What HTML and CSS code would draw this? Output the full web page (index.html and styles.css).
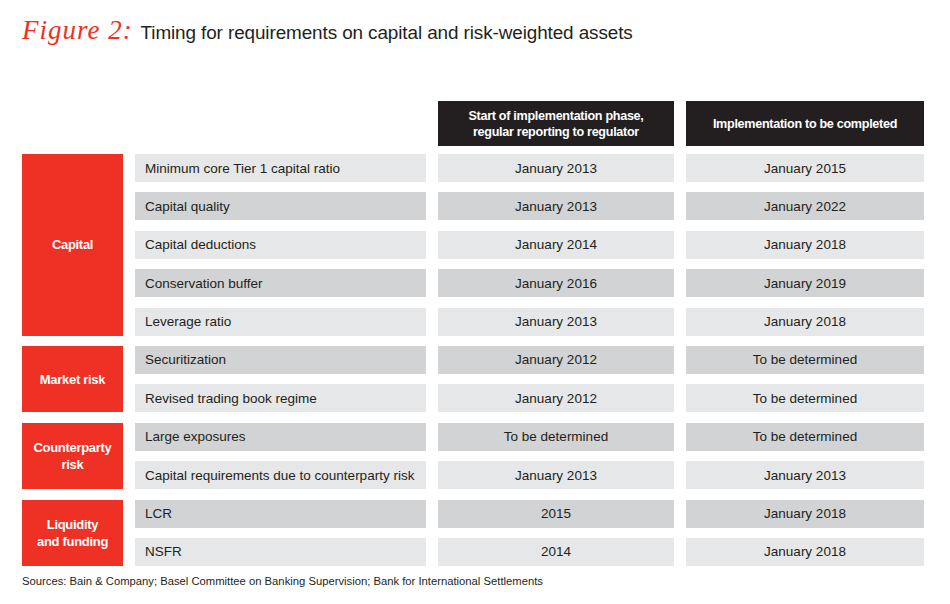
FILE: index.html
```html
<!DOCTYPE html>
<html>
<head>
<meta charset="utf-8">
<link rel="stylesheet" href="styles.css">
</head>
<body>
<div class="page">
  <h1 class="title"><span class="fig">Figure 2:</span> Timing for requirements on capital and risk-weighted assets</h1>
  <div class="grid head">
    <div class="blank"></div>
    <div class="blank"></div>
    <div class="hcell">Start of implementation phase,<br>regular reporting to regulator</div>
    <div class="hcell">Implementation to be completed</div>
  </div>
  <div class="grid body">
    <div class="cat" style="grid-row: 1 / span 5">Capital</div>
    <div class="cell label light">Minimum core Tier 1 capital ratio</div>
    <div class="cell light">January 2013</div>
    <div class="cell light">January 2015</div>
    <div class="cell label dark">Capital quality</div>
    <div class="cell dark">January 2013</div>
    <div class="cell dark">January 2022</div>
    <div class="cell label light">Capital deductions</div>
    <div class="cell light">January 2014</div>
    <div class="cell light">January 2018</div>
    <div class="cell label dark">Conservation buffer</div>
    <div class="cell dark">January 2016</div>
    <div class="cell dark">January 2019</div>
    <div class="cell label light">Leverage ratio</div>
    <div class="cell light">January 2013</div>
    <div class="cell light">January 2018</div>

    <div class="cat" style="grid-row: 6 / span 2">Market risk</div>
    <div class="cell label dark">Securitization</div>
    <div class="cell dark">January 2012</div>
    <div class="cell dark">To be determined</div>
    <div class="cell label light">Revised trading book regime</div>
    <div class="cell light">January 2012</div>
    <div class="cell light">To be determined</div>

    <div class="cat" style="grid-row: 8 / span 2">Counterparty<br>risk</div>
    <div class="cell label dark">Large exposures</div>
    <div class="cell dark">To be determined</div>
    <div class="cell dark">To be determined</div>
    <div class="cell label light">Capital requirements due to counterparty risk</div>
    <div class="cell light">January 2013</div>
    <div class="cell light">January 2013</div>

    <div class="cat" style="grid-row: 10 / span 2">Liquidity<br>and funding</div>
    <div class="cell label dark">LCR</div>
    <div class="cell dark">2015</div>
    <div class="cell dark">January 2018</div>
    <div class="cell label light">NSFR</div>
    <div class="cell light">2014</div>
    <div class="cell light">January 2018</div>
  </div>
  <p class="source">Sources: Bain &amp; Company; Basel Committee on Banking Supervision; Bank for International Settlements</p>
</div>
</body>
</html>
```
FILE: styles.css
```css
html, body {
  margin: 0;
  padding: 0;
  background: #ffffff;
}
body {
  font-family: "Liberation Sans", Arial, sans-serif;
  color: #231f20;
}
.page {
  width: 950px;
  height: 604px;
  padding: 16px 0 0 22px;
  box-sizing: border-box;
}
.title {
  margin: 0;
  font-size: 18.9px;
  font-weight: normal;
  line-height: 28px;
  height: 28px;
  color: #231f20;
  letter-spacing: -0.1px;
  white-space: nowrap;
}
.fig {
  font-family: "Liberation Serif", serif;
  font-style: italic;
  color: #ee3124;
  font-size: 27px;
  letter-spacing: 1px;
  margin-right: 3px;
}
.grid {
  display: grid;
  grid-template-columns: 101px 291px 236px 238px;
  column-gap: 12px;
}
.head {
  margin-top: 57px;
  margin-bottom: 8px;
}
.hcell {
  height: 45px;
  background: #231f20;
  color: #ffffff;
  font-weight: bold;
  font-size: 12.6px;
  letter-spacing: -0.3px;
  line-height: 16px;
  display: flex;
  align-items: center;
  justify-content: center;
  text-align: center;
}
.body {
  grid-auto-rows: 28px;
  row-gap: 10.4px;
}
.cat {
  grid-column: 1;
  background: #ee3124;
  color: #ffffff;
  font-weight: bold;
  font-size: 13px;
  letter-spacing: -0.3px;
  line-height: 17px;
  display: flex;
  align-items: center;
  justify-content: center;
  text-align: center;
}
.cell {
  display: flex;
  align-items: center;
  justify-content: center;
  font-size: 13.5px;
  color: #231f20;
}
.cell.label {
  grid-column: 2;
  justify-content: flex-start;
  padding-left: 10px;
}
.light { background: #e6e7e8; }
.dark { background: #d1d3d4; }
.source {
  margin: 9px 0 0;
  font-size: 11.25px;
  color: #231f20;
}
```
